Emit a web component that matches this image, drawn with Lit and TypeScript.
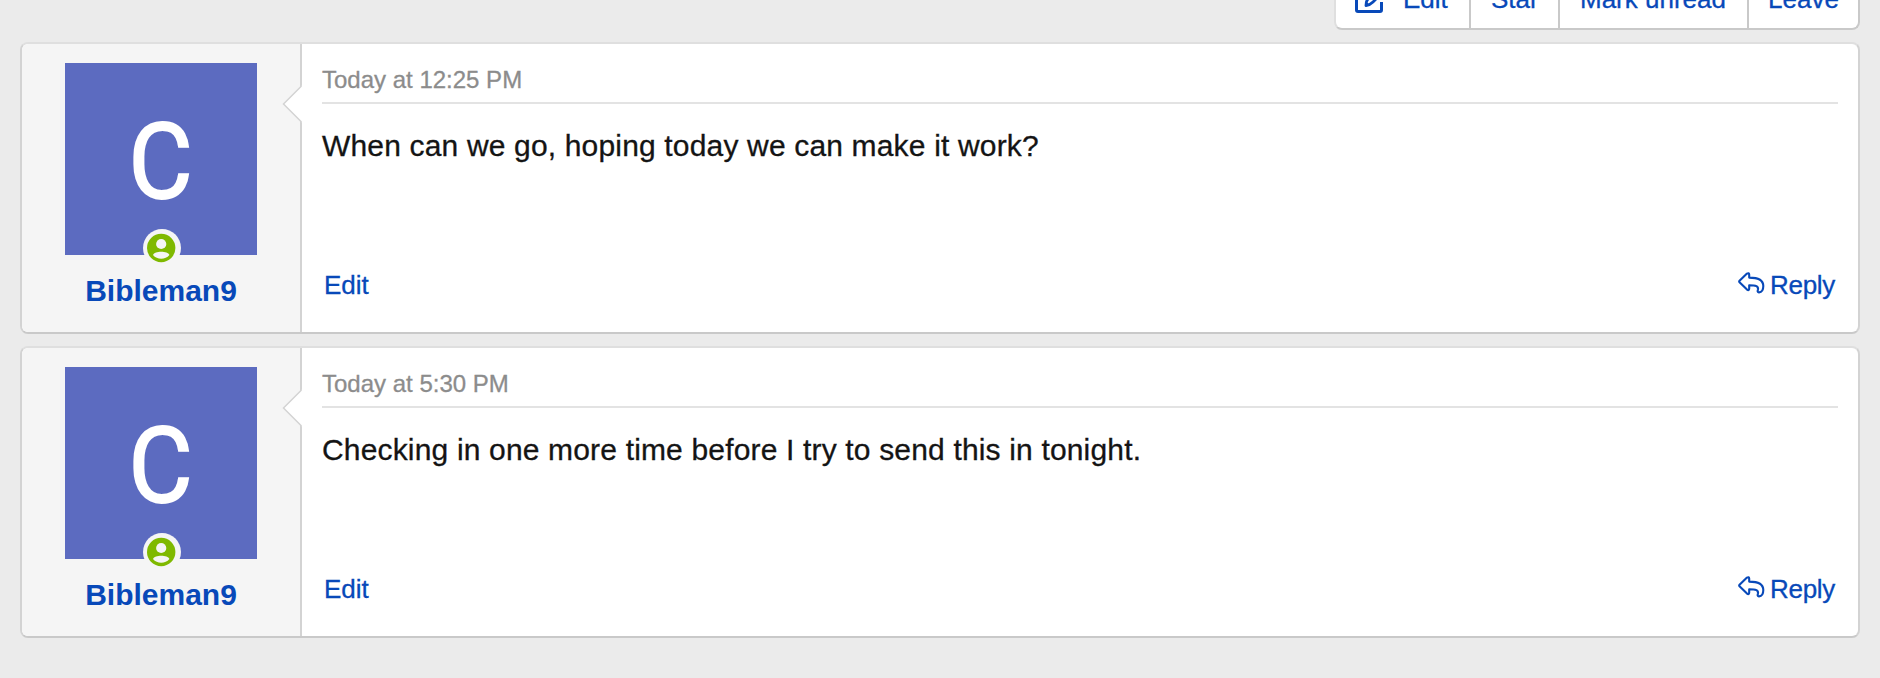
import { LitElement, html, css } from "lit";
import { customElement, property } from "lit/decorators.js";

@customElement("message-card")
class MessageCard extends LitElement {
  @property() time = "";
  @property() text = "";

  static styles = css`
    :host { display: block; }
    .card {
      box-sizing: border-box;
      height: 292px;
      display: flex;
      background: #fff;
      border: 2px solid;
      border-color: #dfdfdf #d3d3d3 #c9c9c9 #d3d3d3;
      border-radius: 8px;
    }
    .author {
      box-sizing: border-box;
      width: 280px;
      background: #f5f5f5;
      border-right: 2px solid #d3d3d3;
      border-radius: 6px 0 0 6px;
      position: relative;
      display: flex;
      flex-direction: column;
      align-items: center;
      padding-top: 19px;
    }
    .avatar {
      width: 192px;
      height: 192px;
      background: #5c6bc0;
      position: relative;
      display: flex;
      align-items: center;
      justify-content: center;
    }
    .letter {
      font: 400 106px/192px Roboto, sans-serif;
      color: #fff;
      -webkit-text-stroke: 1.8px #fff;
      transform: translate(-1px, 2.5px) scaleX(0.93);
    }
    .badge { position: absolute; left: 77px; top: 165px; }
    .name {
      margin-top: 18px;
      font-weight: 700;
      font-size: 30px;
      line-height: 36px;
      color: #0849b9;
    }
    .arrow { position: absolute; left: 260px; top: 40px; }
    .main {
      flex: 1;
      display: flex;
      flex-direction: column;
      padding: 20px 20px 0;
      -webkit-text-stroke: 0.3px currentColor;
    }
    .time {
      box-sizing: border-box;
      height: 40px;
      font-size: 24px;
      line-height: 32px;
      color: #8c8c8c;
      border-bottom: 2px solid #e3e3e3;
    }
    .text {
      font-size: 30px;
      line-height: 42px;
      height: 122px;
      margin-top: 21px;
      color: #141414;
      letter-spacing: 0.165px;
      white-space: nowrap;
    }
    .actions {
      display: flex;
      justify-content: space-between;
      padding: 0 3px 0 2px;
      font-size: 26px;
      line-height: 32px;
      margin-top: 22px;
      color: #0849b9;
    }
    .reply { display: flex; gap: 5px; letter-spacing: -0.3px; }
  `;

  render() {
    return html`<div class="card">
      <div class="author">
        <div class="avatar">
          <span class="letter">C</span>
          <svg class="badge" width="40" height="40" viewBox="0 0 40 40">
            <circle cx="20" cy="20" r="19" fill="#f5f5f5" />
            <circle cx="19.200" cy="20" r="14.200" fill="#7fb900" />
            <circle cx="19.200" cy="16" r="5.100" fill="#f5f5f5" />
            <path d="M11 27C12.500 22.700 25.900 22.700 27.400 27C23.400 32 15 32 11 27Z" fill="#f5f5f5" />
          </svg>
        </div>
        <div class="name">Bibleman9</div>
        <svg class="arrow" width="20" height="40" viewBox="0 0 20 40">
          <path d="M20 1.500L1.500 20L20 38.500Z" fill="#fff" />
          <path d="M19.500 2L1.500 20L19.500 38" fill="none" stroke="#d3d3d3" stroke-width="1.500" />
        </svg>
      </div>
      <div class="main">
        <div class="time">${this.time}</div>
        <div class="text">${this.text}</div>
        <div class="actions">
          <span>Edit</span>
          <span class="reply">
            <svg width="28" height="28" viewBox="0 0 28 28">
              <path d="M2.500 13.200Q1.800 12.500 2.500 11.800L10 4.600Q12 3.400 12.200 5.600V8.600C21 8.600 26.300 11 26.300 17C26.300 20.800 24.500 23.200 22 23.400Q20 23.200 20.900 20.800C21.800 17.200 19 16.200 12.200 16.200V19.600Q12 22 10 20.600Z" fill="none" stroke="#0849b9" stroke-width="2.100" stroke-linejoin="round" />
            </svg>
            <span>Reply</span>
          </span>
        </div>
      </div>
    </div>`;
  }
}

@customElement("app-root")
class AppRoot extends LitElement {
  static styles = css`
    :host {
      display: block;
      box-sizing: border-box;
      height: 678px;
      overflow: hidden;
      background: #ebebeb;
      font-family: "Liberation Sans", Arial, sans-serif;
      padding: 0 20px;
    }
    .toolbar {
      box-sizing: border-box;
      margin: -32px 0 12px auto;
      width: 526px;
      height: 62px;
      display: flex;
      background: #fff;
      border: 2px solid;
      border-color: #dfdfdf #c9c9c9 #c9c9c9 #dfdfdf;
      border-radius: 8px;
      color: #0849b9;
      font-size: 26px;
      line-height: 32px;
      -webkit-text-stroke: 0.3px currentColor;
    }
    .btn {
      box-sizing: border-box;
      padding: 13px 0 0 20px;
      white-space: nowrap;
      border-right: 2px solid #c9c9c9;
    }
    .btn:last-child { border-right: 0; padding-left: 19px; }
    .edit { width: 135px; display: flex; gap: 18px; padding-left: 19px; }
    .pencil { margin-top: 2px; }
    .star { width: 89px; }
    .mark { width: 189px; }
    .list { display: flex; flex-direction: column; gap: 12px; }
  `;

  render() {
    return html`
      <div class="toolbar">
        <div class="btn edit">
          <svg class="pencil" width="30" height="30" viewBox="0 0 30 30">
            <path d="M14 4H3Q1.500 4 1.500 5.500V25Q1.500 26.500 3 26.500H25Q26.500 26.500 26.500 25V17" fill="none" stroke="#0849b9" stroke-width="3" />
            <path d="M11 20.500Q11 16 13 14L24 3L28 7L18 17Q15 20 11 20.500Z" fill="none" stroke="#0849b9" stroke-width="2.800" stroke-linejoin="round" />
          </svg>
          <span>Edit</span>
        </div>
        <div class="btn star">Star</div>
        <div class="btn mark">Mark unread</div>
        <div class="btn">Leave</div>
      </div>
      <div class="list">
        <message-card time="Today at 12:25 PM" text="When can we go, hoping today we can make it work?"></message-card>
        <message-card time="Today at 5:30 PM" text="Checking in one more time before I try to send this in tonight."></message-card>
      </div>
    `;
  }
}
